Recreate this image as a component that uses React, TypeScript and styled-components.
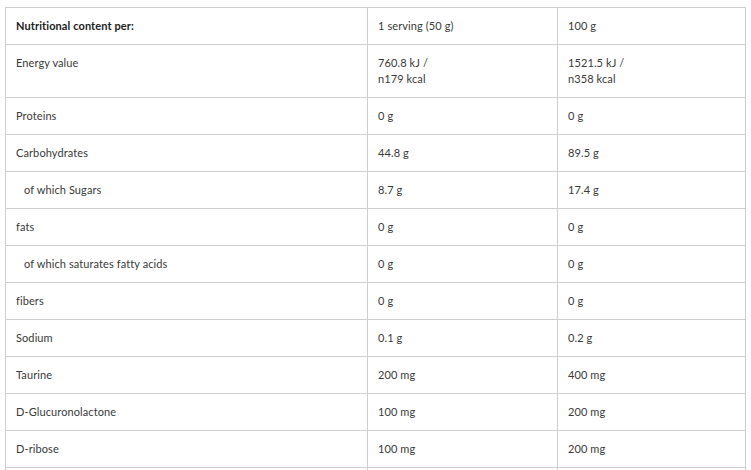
import React from "react";
import styled, { createGlobalStyle } from "styled-components";

const Global = createGlobalStyle`
  html, body { margin: 0; padding: 0; background: #fff; }
  body { font-family: Lato, "Noto Sans", sans-serif; }
`;

const Wrapper = styled.div`
  padding: 7px 6px 0 5px;
  height: 470px;
  overflow: hidden;
  box-sizing: border-box;
`;

const Table = styled.table`
  width: 740px;
  border-collapse: collapse;
  table-layout: fixed;
  font-size: 11px;
  color: #3a3a3a;
  font-variant-ligatures: none;
  letter-spacing: 0.1px;
`;

const Cell = styled.td<{ $head?: boolean; $indent?: boolean }>`
  border: 1px solid #cfcfcf;
  padding: 10px 10px 10px ${(p) => (p.$indent ? "18px" : "10px")};
  line-height: 16px;
  height: 16px;
  vertical-align: top;
  text-align: left;
  font-weight: ${(p) => (p.$head ? 700 : 400)};
  color: ${(p) => (p.$head ? "#222" : "#3a3a3a")};
`;

type Row = { label: string; a: React.ReactNode; b: React.ReactNode; indent?: boolean };

const rows: Row[] = [
  {
    label: "Energy value",
    a: (<>760.8 kJ /<br />n179 kcal</>),
    b: (<>1521.5 kJ /<br />n358 kcal</>),
  },
  { label: "Proteins", a: "0 g", b: "0 g" },
  { label: "Carbohydrates", a: "44.8 g", b: "89.5 g" },
  { label: "of which Sugars", a: "8.7 g", b: "17.4 g", indent: true },
  { label: "fats", a: "0 g", b: "0 g" },
  { label: "of which saturates fatty acids", a: "0 g", b: "0 g", indent: true },
  { label: "fibers", a: "0 g", b: "0 g" },
  { label: "Sodium", a: "0.1 g", b: "0.2 g" },
  { label: "Taurine", a: "200 mg", b: "400 mg" },
  { label: "D-Glucuronolactone", a: "100 mg", b: "200 mg" },
  { label: "D-ribose", a: "100 mg", b: "200 mg" },
];

export default function App() {
  return (
    <>
      <Global />
      <Wrapper>
        <Table>
          <colgroup>
            <col style={{ width: 362 }} />
            <col style={{ width: 190 }} />
            <col style={{ width: 188 }} />
          </colgroup>
          <tbody>
            <tr>
              <Cell $head>Nutritional content per:</Cell>
              <Cell>1 serving (50 g)</Cell>
              <Cell>100 g</Cell>
            </tr>
            {rows.map((r) => (
              <tr key={r.label}>
                <Cell $indent={r.indent}>{r.label}</Cell>
                <Cell>{r.a}</Cell>
                <Cell>{r.b}</Cell>
              </tr>
            ))}
            <tr>
              <Cell />
              <Cell />
              <Cell />
            </tr>
          </tbody>
        </Table>
      </Wrapper>
    </>
  );
}
